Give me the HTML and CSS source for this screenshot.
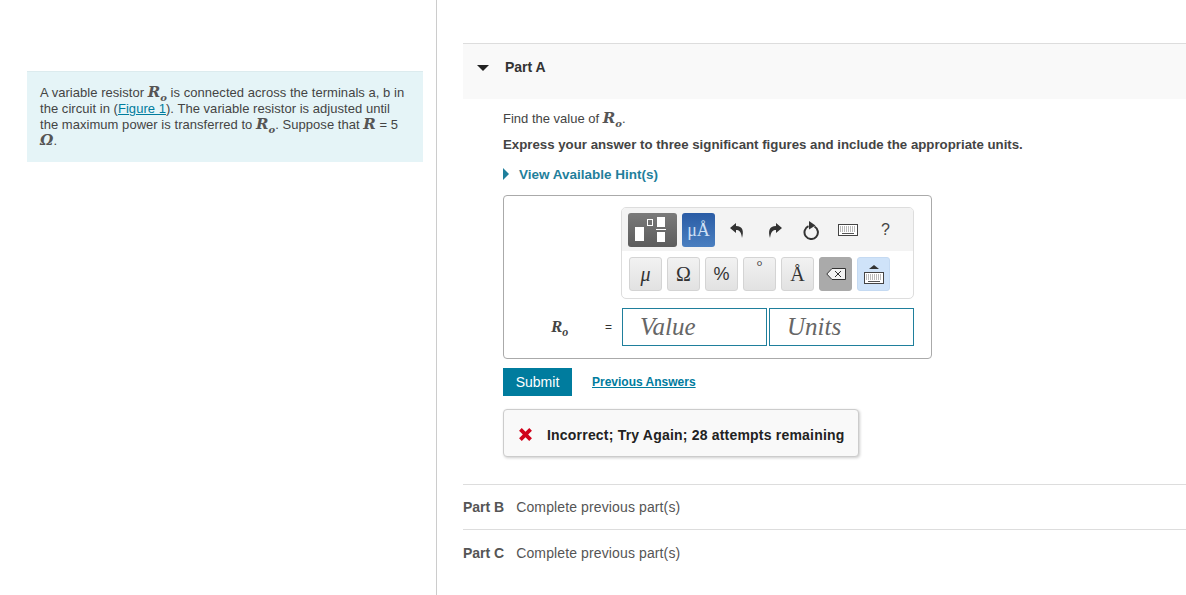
FILE: index.html
```html
<!DOCTYPE html>
<html lang="en">
<head>
    <meta charset="UTF-8">
    <meta name="viewport" content="width=device-width, initial-scale=1.0">
    <title>Part A</title>
    <link rel="stylesheet" href="styles.css">
</head>
<body>
    <div class="page">
        <!-- problem text -->
        <div class="left-col">
            <div class="intro">
                A variable resistor <span class="math">R<sub>o</sub></span> is connected across the terminals a, b in<br>
                the circuit in (<a href="#" class="figure-link">Figure 1</a>). The variable resistor is adjusted until<br>
                the maximum power is transferred to <span class="math">R<sub>o</sub></span>. Suppose that <span class="math">R</span> = 5<br>
                <span class="math">Ω</span>.
            </div>
        </div>

        <div class="right-col">
            <div class="part-header">
                <span class="caret-down"></span>
                <span class="part-title">Part A</span>
            </div>

            <div class="part-body">
                <p class="question">Find the value of <span class="math">R<sub>o</sub></span>.</p>
                <p class="instruction">Express your answer to three significant figures and include the appropriate units.</p>
                <div class="hint"><span class="caret-right"></span>View Available Hint(s)</div>

                <div class="answer-box">
                    <div class="toolbar">
                        <div class="toolbar-top">
                            <div class="tool-main tool-templates">
                                <svg width="49" height="34" viewBox="0 0 49 34">
                                    <rect x="7" y="14" width="9" height="14" fill="#fff"/>
                                    <rect x="19.500" y="6.500" width="5" height="6" fill="none" stroke="#fff"/>
                                    <rect x="29" y="4" width="8" height="10" fill="#fff"/>
                                    <rect x="28" y="16" width="10" height="1" fill="#fff"/>
                                    <rect x="29" y="19" width="8" height="10" fill="#fff"/>
                                </svg>
                            </div>
                            <div class="tool-main tool-units">μÅ</div>
                            <svg class="tool-icon tool-undo" width="14" height="15" viewBox="0 0 14 15"><path d="M6 0 0 5l6 5V7c3 0 5 1 6 8 2-7 1-12-6-12z" fill="#333"/></svg>
                            <svg class="tool-icon tool-redo" width="14" height="15" viewBox="0 0 14 15"><path d="M8 0l6 5-6 5V7c-3 0-5 1-6 8C0 8 1 3 8 3z" fill="#333"/></svg>
                            <svg class="tool-icon tool-reset" width="17" height="19" viewBox="0 0 17 19"><path d="M5.500 5.200a6.700 6.700 0 1 0 6 .3" fill="none" stroke="#333" stroke-width="2"/><path d="M6 0l6.500 4.500L6 8.500z" fill="#333"/></svg>
                            <svg class="tool-icon tool-keys" width="20" height="12" viewBox="0 0 20 12"><rect x=".5" y=".5" width="19" height="11" fill="#fff" stroke="#444"/><path d="M2 3h16M2 5h16M2 7h16" stroke="#777" stroke-dasharray="1 1"/><path d="M4 9.500h12" stroke="#555"/></svg>
                            <span class="tool-help">?</span>
                        </div>
                        <div class="toolbar-bottom">
                            <div class="key key-serif"><i>μ</i></div>
                            <div class="key key-serif">Ω</div>
                            <div class="key key-percent">%</div>
                            <div class="key key-serif key-degree">°</div>
                            <div class="key key-serif">Å</div>
                            <div class="key key-delete">
                                <svg width="20" height="12" viewBox="0 0 20 12"><path d="M6 .5h13.500v11H6L.8 6z" fill="#f4f4f4" stroke="#333"/><path d="M9 3l6 6M15 3l-6 6" stroke="#333"/></svg>
                            </div>
                            <div class="key key-keyboard">
                                <svg width="20" height="21" viewBox="0 0 20 21"><path d="M10 1l5 4H5z" fill="#333"/><rect x=".5" y="8.500" width="19" height="11" fill="#fff" stroke="#444"/><path d="M2 11h16M2 13h16M2 15h16" stroke="#777" stroke-dasharray="1 1"/><path d="M4 17.500h12" stroke="#555"/></svg>
                            </div>
                        </div>
                    </div>

                    <div class="answer-row">
                        <span class="answer-label">R<sub>o</sub></span>
                        <span class="equals">=</span>
                        <div class="answer-input answer-value">Value</div>
                        <div class="answer-input answer-units">Units</div>
                    </div>
                </div>

                <div class="actions">
                    <button class="btn-submit">Submit</button>
                    <a href="#" class="prev-link">Previous Answers</a>
                </div>

                <div class="feedback">
                    <svg width="15" height="15" viewBox="0 0 14 14"><path d="M1 3.500 3.500 1 7 4.500 10.500 1 13 3.500 9.500 7l3.500 3.500-2.500 2.500L7 9.500 3.500 13 1 10.500 4.500 7z" fill="#d0021b"/></svg>
                    <span>Incorrect; Try Again; 28 attempts remaining</span>
                </div>
            </div>

            <div class="part-row part-row-b"><b>Part B</b><span>Complete previous part(s)</span></div>
            <div class="part-row part-row-c"><b>Part C</b><span>Complete previous part(s)</span></div>
        </div>
    </div>
</body>
</html>
```

FILE: styles.css
```css
* {
    box-sizing: border-box;
    margin: 0;
    padding: 0;
}

body {
    background: #fff;
    color: #333;
    font-family: "Liberation Sans", Arial, sans-serif;
    font-size: 13px;
    overflow: hidden;
}

a {
    color: #007c9e;
}

.page {
    display: flex;
    height: 595px;
}

.math {
    font-family: "DejaVu Serif", "Liberation Serif", serif;
    font-style: italic;
    font-weight: bold;
    font-size: 15px;
    line-height: 0;
    color: #555;
}

.math sub {
    font-size: 10px;
    line-height: 0;
}

/* left column */
.left-col {
    width: 437px;
    flex-shrink: 0;
    padding: 71px 13px 0 27px;
    border-right: 1px solid #ccc;
}

.intro {
    height: 91px;
    padding: 13px 0 0 13px;
    background: #e5f4f7;
    border-top: 1px solid #dcebee;
    line-height: 16px;
    font-size: 13px;
    letter-spacing: 0.04px;
    color: #444;
    white-space: nowrap;
}

/* right column */
.right-col {
    flex: 1;
    padding: 43px 0 0 26px;
}

.part-header {
    display: flex;
    align-items: flex-start;
    height: 56px;
    padding: 15px 0 0 14px;
    background: #f9f9f9;
    border-top: 1px solid #ddd;
}

.caret-down {
    width: 0;
    height: 0;
    margin: 6px 16px 0 0;
    border-left: 6px solid transparent;
    border-right: 6px solid transparent;
    border-top: 6px solid #222;
}

.part-title {
    font-weight: bold;
    font-size: 14px;
    color: #333;
}

.part-body {
    padding: 11px 0 0 40px;
}

.question {
    height: 26px;
    line-height: 18px;
    font-size: 13px;
    color: #444;
}

.instruction {
    height: 29px;
    line-height: 18px;
    font-weight: bold;
    font-size: 13.250px;
    color: #444;
}

.hint {
    display: flex;
    align-items: center;
    height: 18px;
    font-weight: bold;
    font-size: 13.500px;
    color: #1f7f9c;
}

.caret-right {
    width: 0;
    height: 0;
    margin-right: 10px;
    border-top: 6px solid transparent;
    border-bottom: 6px solid transparent;
    border-left: 6px solid #1f7f9c;
}

.answer-box {
    width: 429px;
    height: 164px;
    margin-top: 12px;
    padding: 11px 17px 0 0;
    border: 1px solid #aaa;
    border-radius: 4px;
}

.toolbar {
    width: 293px;
    height: 92px;
    margin-left: 117px;
    background: #fff;
    border: 1px solid #ddd;
    border-radius: 5px;
    overflow: hidden;
}

.toolbar-top {
    display: flex;
    align-items: center;
    height: 43px;
    padding: 1px 0 0 6px;
    background: #f3f3f3;
}

.tool-main {
    display: flex;
    align-items: center;
    justify-content: center;
    height: 34px;
    border-radius: 3px;
}

.tool-templates {
    width: 49px;
    background: linear-gradient(#7a7a7a, #5c5c5c);
}

.tool-units {
    width: 33px;
    margin-left: 5px;
    background: linear-gradient(#2a5ca5, #4a7fc0);
    color: #cfe0f5;
    font-family: "Liberation Serif", serif;
    font-size: 18px;
}

.tool-icon {
    flex-shrink: 0;
}

.tool-undo {
    margin-left: 15px;
}

.tool-redo {
    margin-left: 24px;
}

.tool-reset {
    margin-left: 21px;
}

.tool-keys {
    margin-left: 18px;
}

.tool-help {
    margin-left: 23px;
    font-size: 16px;
    color: #444;
}

.toolbar-bottom {
    display: flex;
    gap: 5px;
    padding: 6px 0 0 7px;
}

.key {
    display: flex;
    align-items: center;
    justify-content: center;
    width: 33px;
    height: 34px;
    background: linear-gradient(#f2f2f2, #e2e2e2);
    border: 1px solid #d4d4d4;
    border-radius: 3px;
    color: #333;
}

.key-serif {
    font-family: "Liberation Serif", serif;
    font-size: 20px;
}

.key-percent {
    font-size: 18px;
}

.key-degree {
    align-items: flex-start;
    font-size: 15px;
}

.key-delete {
    background: #aaa;
    border-color: #aaa;
}

.key-keyboard {
    background: #cfe3f9;
    border-color: #c5daf2;
}

.answer-row {
    display: flex;
    align-items: center;
    margin-top: 9px;
}

.answer-label {
    width: 54px;
    margin-left: 47px;
    font-family: "Liberation Serif", serif;
    font-style: italic;
    font-weight: bold;
    font-size: 17px;
    color: #444;
}

.answer-label sub {
    font-size: 12px;
    line-height: 0;
}

.equals {
    width: 17px;
    font-size: 12px;
}

.answer-input {
    height: 38px;
    padding-left: 17px;
    border: 1px solid #1f7f9c;
    font-family: "Liberation Serif", serif;
    font-style: italic;
    font-size: 25px;
    line-height: 36px;
    color: #666;
}

.answer-value {
    width: 145px;
    margin-right: 2px;
}

.answer-units {
    width: 145px;
}

.actions {
    display: flex;
    align-items: center;
    gap: 20px;
    margin-top: 9px;
}

.btn-submit {
    width: 69px;
    height: 28px;
    background: #007c9e;
    border: none;
    color: #fff;
    font-family: inherit;
    font-size: 14px;
}

.prev-link {
    font-weight: bold;
    font-size: 12px;
}

.figure-link {
    font-weight: normal;
}

.feedback {
    display: flex;
    align-items: center;
    gap: 14px;
    width: 356px;
    height: 48px;
    margin-top: 13px;
    padding: 3px 0 0 14px;
    background: #f9f9f9;
    border: 1px solid #ccc;
    border-radius: 4px;
    box-shadow: 1px 1px 3px rgba(0, 0, 0, 0.2);
    font-weight: bold;
    font-size: 14px;
    letter-spacing: 0.2px;
    color: #222;
}

.part-row {
    display: flex;
    align-items: center;
    gap: 12px;
    height: 45px;
    border-top: 1px solid #ddd;
    font-size: 14px;
    color: #555;
}

.part-row span {
    letter-spacing: 0.12px;
}

.part-row-b {
    margin-top: 27px;
}

.part-row-c {
    padding-top: 2px;
}
```
